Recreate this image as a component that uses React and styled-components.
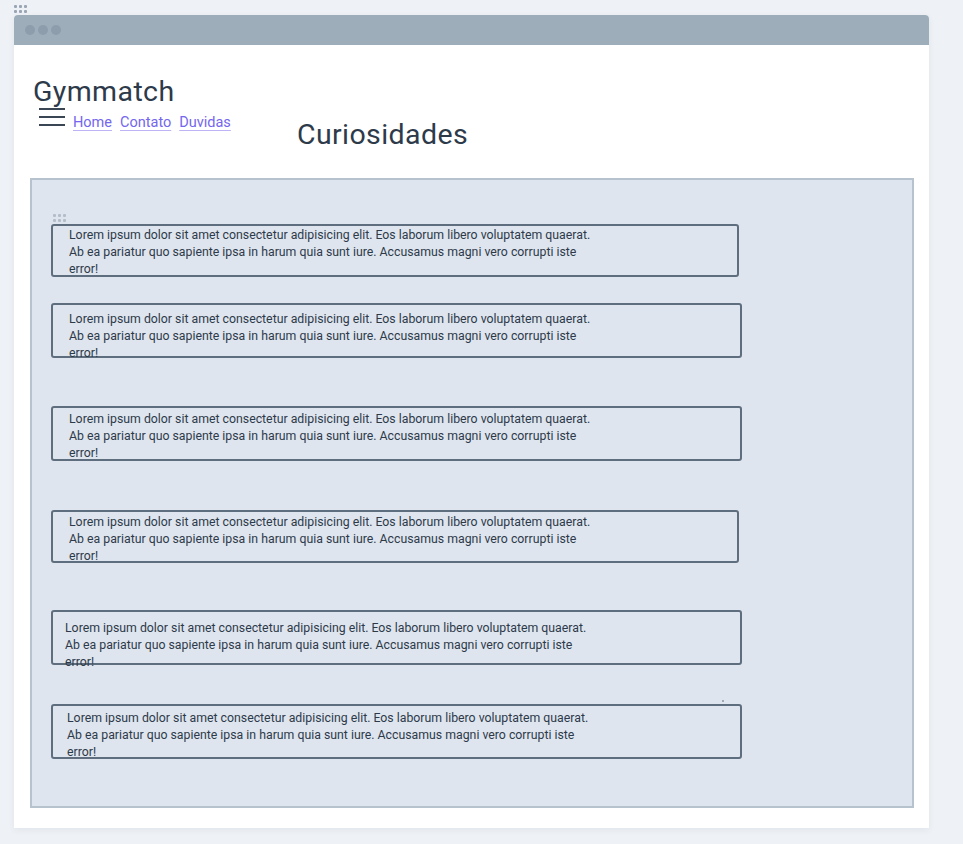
import styled, { createGlobalStyle } from "styled-components";

const GlobalStyle = createGlobalStyle`
  html, body {
    margin: 0;
    padding: 0;
    background: #eef2f6;
    font-family: Roboto, "Liberation Sans", sans-serif;
    color: #2d3a4a;
  }
`;

const Page = styled.div`
  width: 963px;
  height: 844px;
  padding: 5px 0 0 14px;
  box-sizing: border-box;
`;

const Handle = styled.div`
  display: grid;
  grid-template-columns: repeat(3, 3px);
  gap: 2px;
  width: max-content;
  margin: ${(p) => p.$margin || "0"};
  & > span {
    width: 3px;
    height: 3px;
    border-radius: 1px;
    background: ${(p) => p.$color || "#9aa5b4"};
  }
`;

const Window = styled.div`
  width: 915px;
  margin-top: 2px;
  background: #fff;
  border-radius: 4px 4px 0 0;
  box-shadow: 0 2px 6px rgba(60, 80, 110, 0.08);
  padding-bottom: 20px;
`;

const TitleBar = styled.div`
  height: 30px;
  background: #9dadba;
  border-radius: 4px 4px 0 0;
  display: flex;
  align-items: center;
  gap: 3px;
  padding-left: 11px;
`;

const Light = styled.span`
  width: 10px;
  height: 10px;
  border-radius: 50%;
  background: #8d9dab;
`;

const Header = styled.div`
  padding: 30px 0 0 19px;
  height: 104px;
  box-sizing: border-box;
  position: relative;
`;

const Brand = styled.h1`
  margin: 0;
  font-size: 28.5px;
  font-weight: 400;
  line-height: 34px;
  letter-spacing: 0.4px;
  color: #2d3a4a;
`;

const NavRow = styled.div`
  display: flex;
  align-items: flex-start;
  margin-top: -3px;
  padding-left: 6px;
`;

const Burger = styled.div`
  display: flex;
  flex-direction: column;
  gap: 6px;
  width: 26px;
  margin: 2px 8px 0 0;
  & > span {
    height: 2px;
    background: #3a4654;
  }
`;

const NavLink = styled.a`
  font-size: 14.5px;
  color: #7466ee;
  text-decoration: underline;
  text-decoration-color: #bdb4f6;
  text-underline-offset: 3px;
  margin: 7px 8px 0 0;
  line-height: 20px;
`;

const Title = styled.h2`
  position: absolute;
  left: 283px;
  top: 73px;
  margin: 0;
  font-size: 28.5px;
  font-weight: 400;
  line-height: 34px;
  letter-spacing: 0.4px;
  color: #2d3a4a;
`;

const Panel = styled.div`
  margin: 29px 15px 0 16px;
  height: 630px;
  box-sizing: border-box;
  background: #dfe5ee;
  border: 2px solid #b7c2cf;
  padding: 34px 0 0 19px;
  position: relative;
`;

const Card = styled.div`
  width: ${(p) => p.$w}px;
  height: ${(p) => p.$h}px;
  margin-top: ${(p) => p.$mt}px;
  box-sizing: border-box;
  border: 2px solid #5f6e7e;
  border-radius: 3px;
  padding: ${(p) => p.$pt}px 0 0 ${(p) => p.$pl}px;
`;

const CardText = styled.p`
  margin: 0;
  width: 533px;
  font-size: 12.3px;
  line-height: 17px;
  color: #2d3a4a;
`;

const Speck = styled.span`
  position: absolute;
  left: 690px;
  top: 520px;
  width: 2px;
  height: 2px;
  border-radius: 50%;
  background: #8a96a4;
`;

const LOREM =
  "Lorem ipsum dolor sit amet consectetur adipisicing elit. Eos laborum libero voluptatem quaerat. Ab ea pariatur quo sapiente ipsa in harum quia sunt iure. Accusamus magni vero corrupti iste error!";

const cards = [
  { mt: 2, w: 688, h: 53, pt: 1, pl: 16 },
  { mt: 26, w: 691, h: 55, pt: 6, pl: 16 },
  { mt: 48, w: 691, h: 55, pt: 3, pl: 16 },
  { mt: 49, w: 688, h: 53, pt: 2, pl: 16 },
  { mt: 47, w: 691, h: 55, pt: 8, pl: 12 },
  { mt: 39, w: 691, h: 55, pt: 4, pl: 14 },
];

const Dots = ({ color, margin }) => (
  <Handle $color={color} $margin={margin}>
    {[0, 1, 2, 3, 4, 5].map((i) => (
      <span key={i} />
    ))}
  </Handle>
);

export default function App() {
  return (
    <>
      <GlobalStyle />
      <Page>
        <Dots />
        <Window>
          <TitleBar>
            <Light />
            <Light />
            <Light />
          </TitleBar>
          <Header>
            <Brand>Gymmatch</Brand>
            <NavRow>
              <Burger>
                <span />
                <span />
                <span />
              </Burger>
              <NavLink href="#">Home</NavLink>
              <NavLink href="#">Contato</NavLink>
              <NavLink href="#">Duvidas</NavLink>
            </NavRow>
            <Title>Curiosidades</Title>
          </Header>
          <Panel>
            <Dots color="#b4bdca" margin="0 0 0 2px" />
            {cards.map((c, i) => (
              <Card key={i} $mt={c.mt} $w={c.w} $h={c.h} $pt={c.pt} $pl={c.pl}>
                <CardText>{LOREM}</CardText>
              </Card>
            ))}
            <Speck />
          </Panel>
        </Window>
      </Page>
    </>
  );
}
